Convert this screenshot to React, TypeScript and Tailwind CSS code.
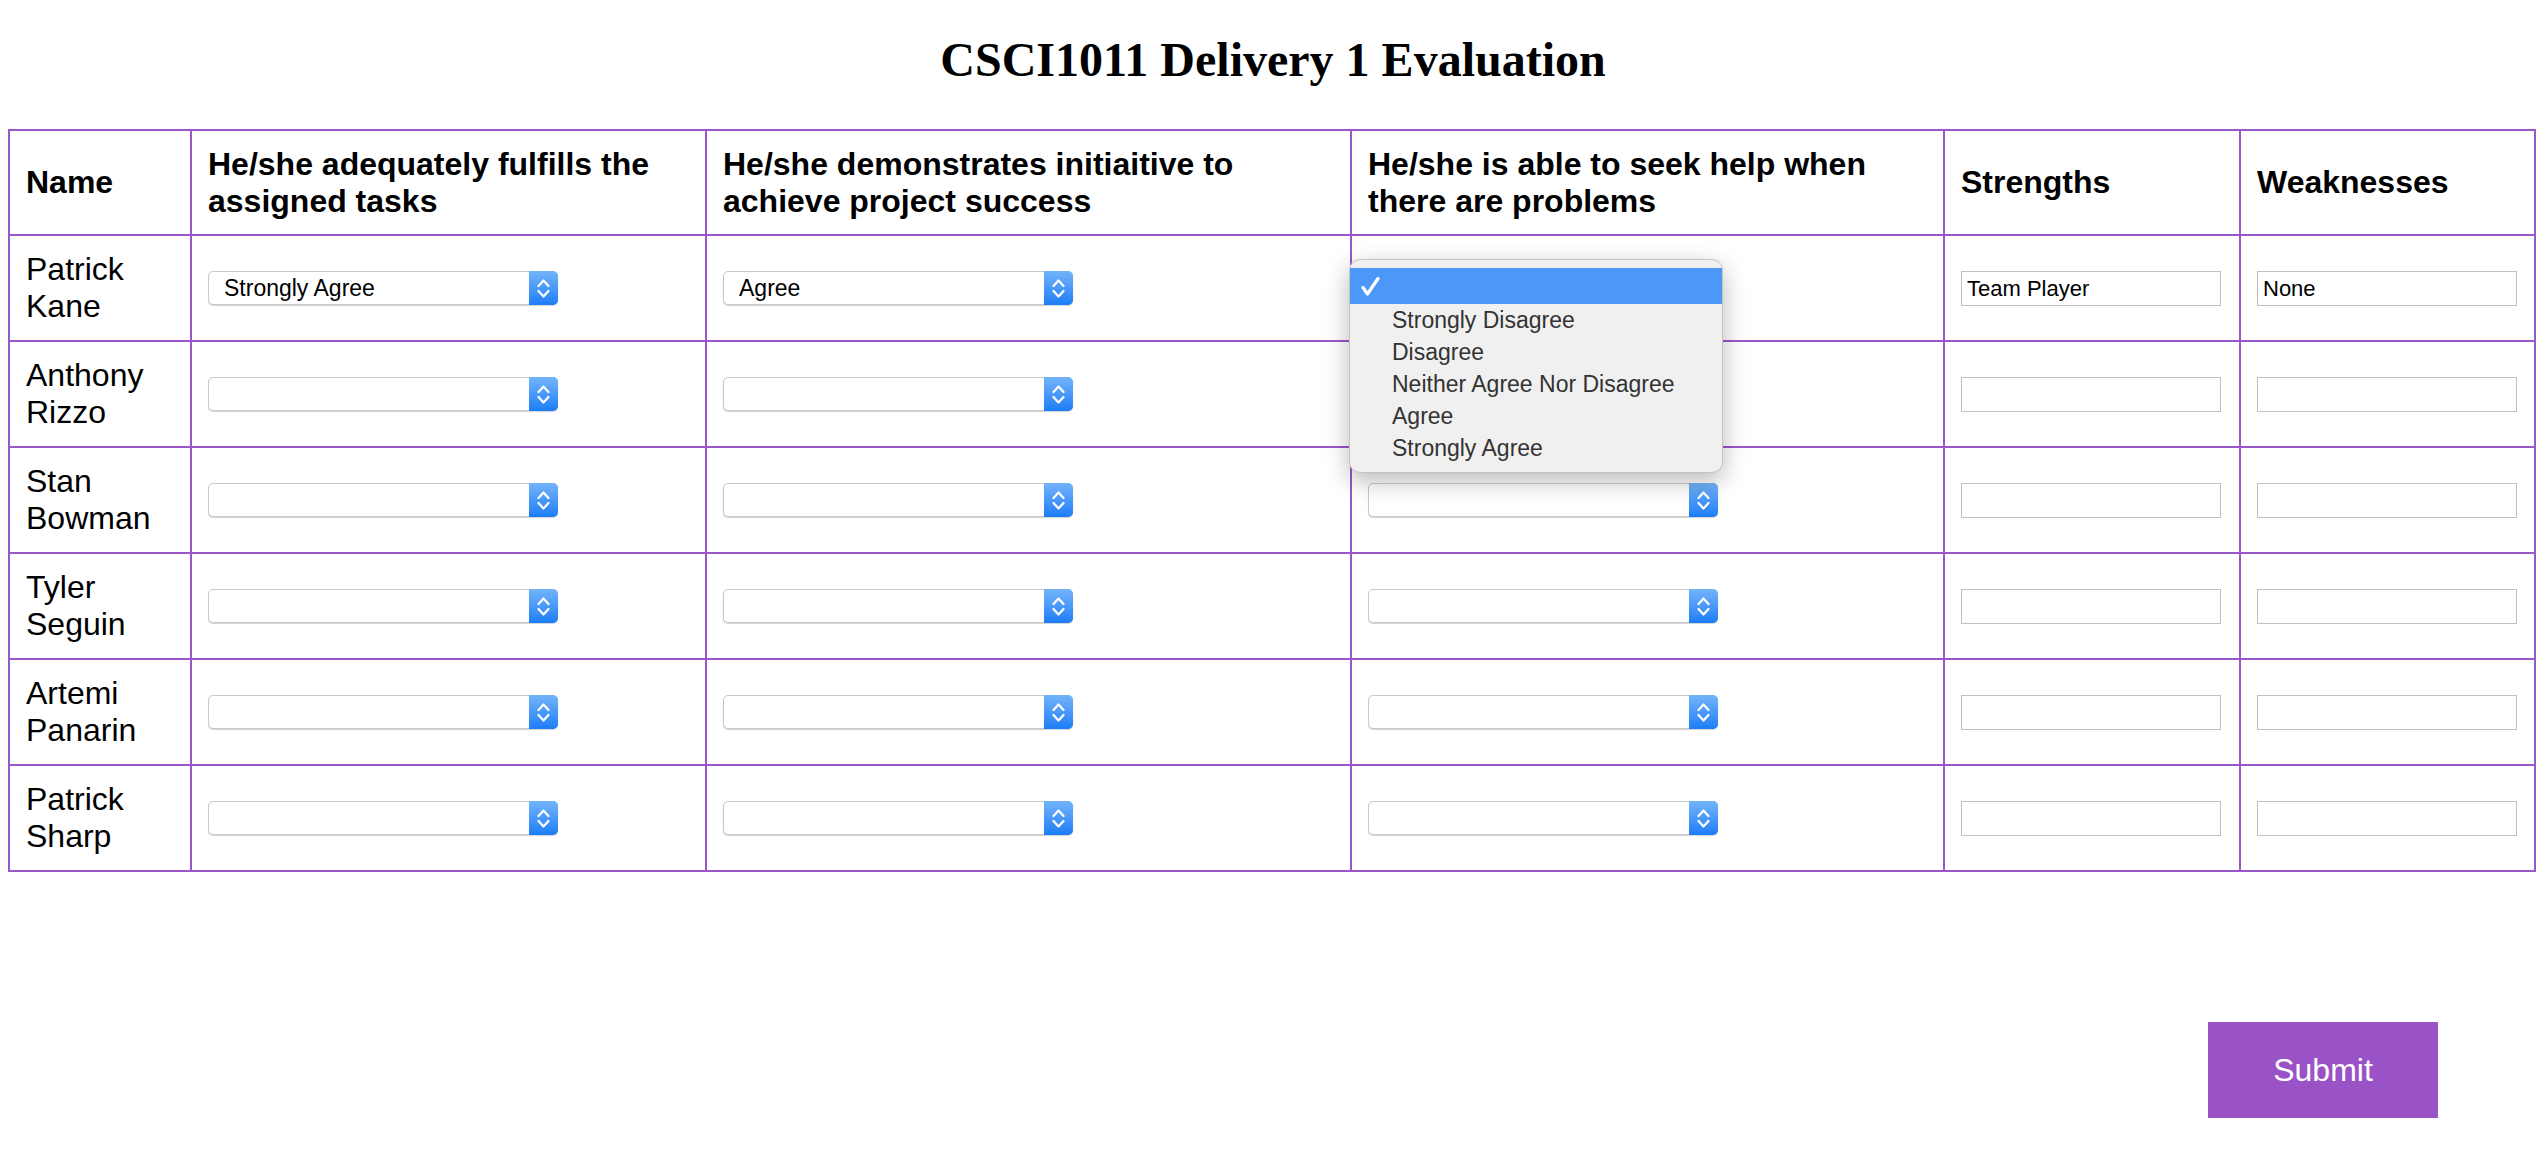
import React from "react";

type Row = {
  name: string[];
  tasks: string;
  initiative: string;
  help: string;
  strengths: string;
  weaknesses: string;
};

const rows: Row[] = [
  { name: ["Patrick", "Kane"], tasks: "Strongly Agree", initiative: "Agree", help: "", strengths: "Team Player", weaknesses: "None" },
  { name: ["Anthony", "Rizzo"], tasks: "", initiative: "", help: "", strengths: "", weaknesses: "" },
  { name: ["Stan", "Bowman"], tasks: "", initiative: "", help: "", strengths: "", weaknesses: "" },
  { name: ["Tyler", "Seguin"], tasks: "", initiative: "", help: "", strengths: "", weaknesses: "" },
  { name: ["Artemi", "Panarin"], tasks: "", initiative: "", help: "", strengths: "", weaknesses: "" },
  { name: ["Patrick", "Sharp"], tasks: "", initiative: "", help: "", strengths: "", weaknesses: "" },
];

const options = [
  "Strongly Disagree",
  "Disagree",
  "Neither Agree Nor Disagree",
  "Agree",
  "Strongly Agree",
];

const cell = "border-r-2 border-b-2 border-[#9b57c9] flex items-center px-4";

// mac style select box, drawn by hand
const FakeSelect = ({ value }: { value: string }) => (
  <div className="flex h-[34px] w-[350px] rounded-[5px] border border-[#c9c9c9] bg-white shadow-[0_1px_1px_rgba(0,0,0,0.18)]">
    <div className="flex flex-1 items-center pl-[15px] text-[23px] text-black">{value}</div>
    <div className="-my-px -mr-px flex w-[29px] items-center justify-center rounded-r-[5px] bg-gradient-to-b from-[#72b4fa] to-[#197cf7]">
      <svg width="13" height="21" viewBox="0 0 13 21" fill="none">
        <path d="M1.5 8 L6.5 2.5 L11.5 8" stroke="white" strokeWidth="2.2" strokeLinecap="round" strokeLinejoin="round" />
        <path d="M1.5 13 L6.5 18.5 L11.5 13" stroke="white" strokeWidth="2.2" strokeLinecap="round" strokeLinejoin="round" />
      </svg>
    </div>
  </div>
);

const TextBox = ({ value }: { value: string }) => (
  <input
    readOnly
    value={value}
    className="h-[35px] w-[260px] border border-[#c0c0c0] px-[5px] text-[22px] text-black outline-none"
  />
);

const OpenMenu = () => (
  <div className="absolute left-[1339px] top-[128px] z-10 w-[374px] rounded-[11px] border border-[#c4c4c4] bg-[#f0f0f0] pb-2 pt-[8px] shadow-[0_8px_24px_rgba(0,0,0,0.28)]">
    <div className="flex h-[36px] items-center bg-[#4b98f8] pl-[11px]">
      <svg width="19" height="19" viewBox="0 0 19 19" fill="none">
        <path d="M2 10.5 L6.5 17 L17 1.5" stroke="white" strokeWidth="3.2" strokeLinecap="round" strokeLinejoin="round" />
      </svg>
    </div>
    {options.map((o) => (
      <div key={o} className="flex h-[32px] items-center pl-[42px] text-[23px] text-[#333]">
        {o}
      </div>
    ))}
  </div>
);

export default function App() {
  return (
    <div className="min-h-[1166px] bg-white pb-12 font-['Liberation_Sans',Arial,sans-serif]">
      <h1 className="pt-[33px] text-center font-['Liberation_Serif','Times_New_Roman',serif] text-[48px] font-bold leading-[53px] text-black">
        CSCI1011 Delivery 1 Evaluation
      </h1>

      <div className="relative ml-2 mt-[43px] grid w-fit grid-cols-[182px_515px_645px_593px_296px_295px] border-l-2 border-t-2 border-[#9b57c9] text-[32px] leading-[37px] text-black">
        <div className={clsx(cell, "h-[105px] font-bold")}>Name</div>
        <div className={clsx(cell, "h-[105px] font-bold")}>He/she adequately fulfills the assigned tasks</div>
        <div className={clsx(cell, "h-[105px] font-bold")}>He/she demonstrates initiaitive to achieve project success</div>
        <div className={clsx(cell, "h-[105px] font-bold")}>He/she is able to seek help when there are problems</div>
        <div className={clsx(cell, "h-[105px] font-bold")}>Strengths</div>
        <div className={clsx(cell, "h-[105px] font-bold")}>Weaknesses</div>

        {rows.map((r, i) => (
          <React.Fragment key={i}>
            <div className={clsx(cell, "h-[106px]")}>
              <div>
                {r.name[0]}
                <br />
                {r.name[1]}
              </div>
            </div>
            <div className={clsx(cell, "h-[106px]")}>
              <FakeSelect value={r.tasks} />
            </div>
            <div className={clsx(cell, "h-[106px]")}>
              <FakeSelect value={r.initiative} />
            </div>
            <div className={clsx(cell, "h-[106px]")}>
              <FakeSelect value={r.help} />
            </div>
            <div className={clsx(cell, "h-[106px]")}>
              <TextBox value={r.strengths} />
            </div>
            <div className={clsx(cell, "h-[106px]")}>
              <TextBox value={r.weaknesses} />
            </div>
          </React.Fragment>
        ))}

        <OpenMenu />
      </div>

      <div className="mt-[150px] flex justify-end pr-[108px]">
        <button className="h-[96px] w-[230px] bg-[#9a52c7] text-[32px] text-white">Submit</button>
      </div>
    </div>
  );
}

function clsx(...parts: (string | false | undefined)[]) {
  return parts.filter(Boolean).join(" ");
}
